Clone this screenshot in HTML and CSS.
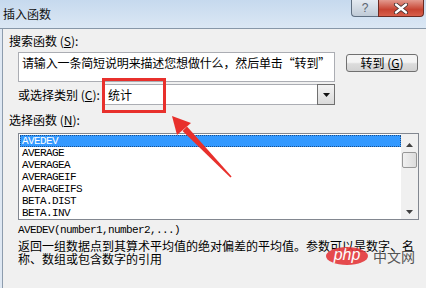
FILE: index.html
```html
<!DOCTYPE html>
<html lang="zh-CN">
    <head>
        <meta charset="UTF-8">
        <title>插入函数</title>
        <link rel="stylesheet" href="styles.css">
    </head>
    <body>
        <div class="window">
            <div class="titlebar">
                <span class="title">插入函数</span>
                <div class="caption-btns">
                    <div class="cap help">?</div>
                    <div class="cap close">
                        <svg width="16" height="11" viewBox="0 0 16 11">
                            <path d="M3 1.5 L13 9.5 M13 1.5 L3 9.5" stroke="#3b2a2a" stroke-width="4" stroke-linecap="round"/>
                            <path d="M3 1.5 L13 9.5 M13 1.5 L3 9.5" stroke="#fff" stroke-width="2.4" stroke-linecap="round"/>
                        </svg>
                    </div>
                </div>
            </div>
            <div class="frame">
                <div class="client">
                    <div class="label">搜索函数 (<u>S</u>):</div>
                    <div class="search-row indent">
                        <div class="search-box">请输入一条简短说明来描述您想做什么，然后单击“转到”</div>
                        <button class="btn">转到 (<u>G</u>)</button>
                    </div>
                    <div class="category-row indent">
                        <span class="cat-label">或选择类别 (<u>C</u>):</span>
                        <div class="combo">
                            <span class="combo-text">统计</span>
                            <div class="combo-btn">
                                <svg width="7" height="4" viewBox="0 0 7 4"><path d="M0 0 H7 L3.5 4 Z" fill="#111"/></svg>
                            </div>
                        </div>
                    </div>
                    <div class="label label-list">选择函数 (<u>N</u>):</div>
                    <div class="listbox indent">
                        <div class="items">
                            <div class="item selected">AVEDEV</div>
                            <div class="item">AVERAGE</div>
                            <div class="item">AVERAGEA</div>
                            <div class="item">AVERAGEIF</div>
                            <div class="item">AVERAGEIFS</div>
                            <div class="item">BETA.DIST</div>
                            <div class="item">BETA.INV</div>
                        </div>
                        <div class="vscroll">
                            <svg width="7" height="4" viewBox="0 0 7 4"><path d="M0 4 H7 L3.5 0 Z" fill="#404040"/></svg>
                            <div class="thumb"></div>
                            <div class="track"></div>
                            <svg width="7" height="4" viewBox="0 0 7 4"><path d="M0 0 H7 L3.5 4 Z" fill="#404040"/></svg>
                        </div>
                    </div>
                    <div class="syntax indent">AVEDEV(number1,number2,...)</div>
                    <div class="desc indent">返回一组数据点到其算术平均值的绝对偏差的平均值。参数可以是数字、名称、数组或包含数字的引用</div>
                </div>
            </div>
        </div>

        <div class="watermark">
            <span class="php">php</span>
            <span class="cn">中文网</span>
        </div>

        <svg class="annot" width="426" height="288" viewBox="0 0 426 288">
            <rect x="103.5" y="79.5" width="61" height="32" fill="none" stroke="#e8302c" stroke-width="3"/>
            <polygon points="172,116 177,135 191,123" fill="#e8302c"/>
            <polygon points="187,126.5 231.6,176.6 230.4,177.4 182.6,131" fill="#e8302c"/>
        </svg>
    </body>
</html>
```

FILE: styles.css
```css
*{
    margin: 0;
    padding: 0;
    box-sizing: border-box;
}
body{
    width: 426px;
    height: 288px;
    overflow: hidden;
    background: #f0f0f0;
    font-family: "Noto Sans CJK SC", "Liberation Sans", sans-serif;
    font-size: 12px;
    color: #000;
    position: relative;
}
u{
    text-decoration: underline;
}
.window{
    display: flex;
    flex-direction: column;
    height: 288px;
}
.titlebar{
    display: flex;
    justify-content: space-between;
    align-items: flex-start;
    height: 29px;
    background: linear-gradient(#c6d9ee, #dbe7f4);
    border-bottom: 1px solid #8797a8;
}
.title{
    font-size: 12px;
    line-height: 28px;
    padding-left: 3px;
    color: #111;
}
.caption-btns{
    display: flex;
    margin-right: 2px;
}
.cap{
    height: 17px;
    display: flex;
    align-items: center;
    justify-content: center;
    border: 1px solid #5e6e80;
    border-top: none;
}
.help{
    width: 27px;
    background: linear-gradient(#e4eaf1, #bfcad6);
    border-radius: 0 0 0 4px;
    border-right: none;
    color: #5a6470;
    font-family: "Liberation Sans", sans-serif;
    font-size: 12px;
    line-height: 17px;
}
.close{
    width: 46px;
    background: linear-gradient(#e39a8e, #c74432 60%, #d8604c);
    border-radius: 0 0 4px 0;
    border-color: #6b2a22;
}
.frame{
    flex: 1;
    display: flex;
    background: #dfe8f3;
    padding-left: 2px;
}
.client{
    flex: 1;
    background: #f0f0f0;
    border-left: 1px solid #8d9cad;
    padding: 5px 0 0 6px;
}
.indent{
    margin-left: 9px;
}
.label{
    line-height: 14px;
}
.search-row{
    display: flex;
    align-items: flex-start;
    gap: 11px;
    margin-top: 4px;
}
.search-box{
    width: 317px;
    height: 30px;
    background: #fff;
    border: 1px solid #abadb3;
    padding: 3px 0 0 3px;
    line-height: 14px;
    white-space: nowrap;
    overflow: hidden;
    letter-spacing: -0.15px;
}
.btn{
    width: 72px;
    height: 18px;
    margin-top: 2px;
    border: 1px solid #707070;
    border-radius: 3px;
    background: linear-gradient(#f4f4f4 45%, #dcdcdc 55%, #d2d2d2);
    font-family: inherit;
    font-size: 12px;
    line-height: 14px;
    color: #000;
}
.category-row{
    display: flex;
    align-items: center;
    margin-top: 2px;
}
.cat-label{
    width: 85px;
    line-height: 14px;
}
.combo{
    width: 232px;
    height: 21px;
    display: flex;
    justify-content: space-between;
    background: #fff;
    border: 1px solid #abadb3;
}
.combo-text{
    padding-left: 4px;
    line-height: 19px;
}
.combo-btn{
    width: 18px;
    display: flex;
    align-items: center;
    justify-content: center;
    background: linear-gradient(#f3f3f3, #dadada);
    border: 1px solid #707070;
    margin: -1px -1px -1px 0;
}
.label-list{
    margin-top: 8px;
}
.listbox{
    display: flex;
    width: 401px;
    height: 87px;
    margin-top: 6px;
    background: #fff;
    border: 1px solid #828790;
}
.items{
    flex: 1;
    padding: 1px 0 0 1px;
    font-family: "Liberation Mono", monospace;
    font-size: 11px;
    letter-spacing: -0.6px;
}
.item{
    height: 12px;
    line-height: 12px;
    padding-left: 2px;
}
.selected{
    background: #3399ff;
    color: #fff;
    outline: 1px dotted #1c4f8a;
    outline-offset: -1px;
}
.vscroll{
    width: 17px;
    display: flex;
    flex-direction: column;
    align-items: center;
    background: #f0f0f0;
    padding: 9px 0 5px;
}
.thumb{
    width: 15px;
    height: 16px;
    margin-top: 5px;
    border: 1px solid #979797;
    border-radius: 2px;
    background: linear-gradient(90deg, #f0f0f0, #dcdcdc);
}
.track{
    flex: 1;
}
.syntax{
    margin-top: 4px;
    font-family: "Liberation Mono", monospace;
    font-size: 11px;
    letter-spacing: -0.6px;
    line-height: 12px;
}
.desc{
    margin-top: 3px;
    width: 402px;
    line-height: 13px;
}
.watermark{
    position: absolute;
    left: 326px;
    top: 247px;
    display: flex;
    align-items: center;
    gap: 5px;
}
.php{
    width: 42px;
    height: 18px;
    border-radius: 50%;
    background: #e4393c;
    color: #fff;
    font-family: "Liberation Sans", sans-serif;
    font-style: italic;
    font-size: 16px;
    line-height: 16px;
    text-align: center;
    opacity: 0.9;
}
.cn{
    font-size: 14px;
    line-height: 16px;
    color: #555;
}
.annot{
    position: absolute;
    left: 0;
    top: 0;
    pointer-events: none;
}
```
